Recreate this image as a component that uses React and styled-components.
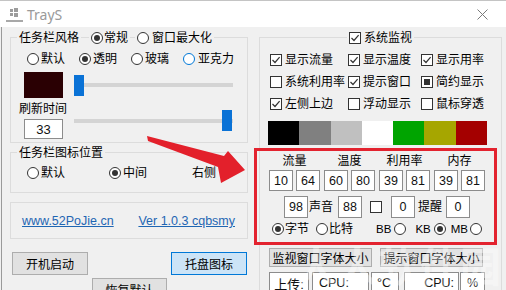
import React from "react";
import styled, { createGlobalStyle } from "styled-components";

const GlobalStyle = createGlobalStyle`
  html, body {
    margin: 0;
    padding: 0;
    background: #f0f0f0;
  }
  body {
    font-family: "Liberation Sans", "Noto Sans CJK SC", sans-serif;
    font-size: 12px;
    color: #000;
  }
`;

const Frame = styled.div`
  position: relative;
  width: 506px;
  height: 290px;
  overflow: hidden;
  background: #f0f0f0;
`;

const TitleBar = styled.div`
  height: 27px;
  box-sizing: border-box;
  background: #fff;
  border-top: 1px solid #c4c4c4;
  display: flex;
  align-items: center;
  padding-left: 6px;
`;

const AppIcon = styled.svg`
  width: 17px;
  height: 15px;
  flex-shrink: 0;
`;

const Title = styled.span`
  margin-left: 4px;
  font-family: "Noto Sans", "Liberation Sans", sans-serif;
  font-size: 14px;
  color: #9a9a9a;
  flex: 1;
`;

const CloseIcon = styled.svg`
  width: 11px;
  height: 11px;
  margin-right: 18px;
`;

const Client = styled.div`
  height: 263px;
  display: flex;
  margin-left: 1px;
  border-left: 1px solid #9a9a9a;
`;

const LeftCol = styled.div`
  width: 250px;
  flex-shrink: 0;
  box-sizing: border-box;
  padding: 10px 0 0 8px;
  display: flex;
  flex-direction: column;

  & > * {
    flex-shrink: 0;
  }
`;

const RightCol = styled.div`
  flex: 1;
  box-sizing: border-box;
  padding: 10px 0 0 7px;
  display: flex;
  flex-direction: column;
`;

const Group = styled.div`
  box-sizing: border-box;
  width: ${(p) => p.$w || 238}px;
  height: ${(p) => (p.$h ? `${p.$h}px` : "auto")};
  margin-top: ${(p) => p.$top || 0}px;
  border: 1px solid #dcdcdc;
  ${(p) => p.$open && "border-bottom: none; flex: 1;"}
  flex-shrink: 0;
  display: flex;
  flex-direction: column;

  & > * {
    flex-shrink: 0;
  }
`;

const GroupHead = styled.div`
  height: 18px;
  margin-top: -9px;
  display: flex;
  align-items: center;
  padding-left: ${(p) => p.$pad ?? 6}px;
  justify-content: ${(p) => (p.$center ? "center" : "flex-start")};
`;

const Legend = styled.span`
  background: #f0f0f0;
  padding: 0 2px;
  line-height: 16px;
  margin-right: ${(p) => p.$mr || 0}px;
`;

const Row = styled.div`
  display: flex;
  align-items: ${(p) => p.$align || "center"};
  margin-top: ${(p) => p.$top || 0}px;
  padding-left: ${(p) => p.$pad || 0}px;
  padding-right: ${(p) => p.$padR || 0}px;
  justify-content: ${(p) => p.$justify || "flex-start"};
`;

const RadioLabel = styled.span`
  display: inline-flex;
  align-items: center;
  gap: 2px;
  height: 16px;
  line-height: 16px;
  white-space: nowrap;
  margin-left: ${(p) => p.$ml || 0}px;
  font-size: ${(p) => p.$fs || 12}px;
  ${(p) => p.$bg && "background: #f0f0f0; padding: 0 2px;"}
`;

const Dot = styled.span`
  width: 12px;
  height: 12px;
  box-sizing: border-box;
  border-radius: 50%;
  border: 1px solid ${(p) => (p.$hover ? "#0078d7" : "#333")};
  background: #fff;
  display: inline-flex;
  align-items: center;
  justify-content: center;
  flex-shrink: 0;

  &::after {
    content: "";
    width: 6px;
    height: 6px;
    border-radius: 50%;
    background: #333;
    display: ${(p) => (p.$checked ? "block" : "none")};
  }
`;

const Radio = ({ checked, hover, right, gap, ml, bg, fs, children }) => (
  <RadioLabel $ml={ml} $bg={bg} $fs={fs} style={gap ? { gap } : undefined}>
    {right && <span>{children}</span>}
    <Dot $checked={checked} $hover={hover} />
    {!right && <span>{children}</span>}
  </RadioLabel>
);

const CheckLabel = styled.span`
  display: inline-flex;
  align-items: center;
  gap: 3px;
  height: 16px;
  line-height: 16px;
  white-space: nowrap;
  ${(p) => p.$bg && "background: #f0f0f0; padding: 0 2px;"}
  margin-left: ${(p) => p.$ml || 0}px;
`;

const Box = styled.span`
  width: 12px;
  height: 12px;
  box-sizing: border-box;
  border: 1px solid #333;
  background: #fff;
  display: inline-flex;
  align-items: center;
  justify-content: center;
  flex-shrink: 0;
`;

const FillMark = styled.span`
  width: 6px;
  height: 6px;
  background: #333;
`;

const Check = ({ state, bg, ml, children }) => (
  <CheckLabel $bg={bg} $ml={ml}>
    <Box>
      {state === "check" && (
        <svg width="10" height="10" viewBox="0 0 10 10">
          <polyline points="1.5,5 4,7.5 8.6,2.2" fill="none" stroke="#333" strokeWidth="1.2" />
        </svg>
      )}
      {state === "fill" && <FillMark />}
    </Box>
    {children && <span>{children}</span>}
  </CheckLabel>
);

const Swatch = styled.div`
  width: 39px;
  height: 26px;
  background: #2a0003;
  margin-left: 13px;
  flex-shrink: 0;
`;

const Slider = styled.div`
  width: 159px;
  height: 21px;
  margin-left: ${(p) => p.$ml || 0}px;
  margin-top: ${(p) => p.$top || 0}px;
  display: flex;
  align-items: center;
  background:
    linear-gradient(#d4d4d4, #d4d4d4) center / 100% 4px no-repeat;
`;

const Thumb = styled.span`
  width: 10px;
  height: 21px;
  background: #0a72d6;
  margin-left: ${(p) => p.$pos}px;
`;

const Stack = styled.div`
  display: flex;
  flex-direction: column;
  margin-left: 8px;
  width: 50px;
`;

const FieldLabel = styled.span`
  height: 16px;
  line-height: 16px;
  margin-top: 3px;
  white-space: nowrap;
`;

const TextBox = styled.div`
  box-sizing: border-box;
  width: ${(p) => p.$w || 24}px;
  height: ${(p) => p.$h || 21}px;
  margin-left: ${(p) => p.$ml || 0}px;
  margin-top: ${(p) => p.$top || 0}px;
  background: #fff;
  border: 1px solid #8c8c8c;
  display: flex;
  align-items: center;
  justify-content: ${(p) => p.$justify || "center"};
  padding: 0 ${(p) => p.$pad || 0}px;
  font-size: ${(p) => p.$fs || 12.5}px;
  color: #111;
  flex-shrink: 0;
  white-space: nowrap;
`;

const Link = styled.a`
  color: #1f66b3;
  text-decoration: underline;
  font-size: 12.5px;
  line-height: 16px;
`;

const Button = styled.div`
  box-sizing: border-box;
  width: ${(p) => p.$w || 76}px;
  height: ${(p) => p.$h || 23}px;
  background: ${(p) => (p.$primary ? "#cce4f7" : "#e1e1e1")};
  border: 1px solid ${(p) => (p.$primary ? "#0078d7" : "#adadad")};
  display: flex;
  align-items: center;
  justify-content: center;
  white-space: nowrap;
  margin-left: ${(p) => p.$ml || 0}px;
  flex-shrink: 0;
`;

const ButtonRow = styled.div`
  display: flex;
  justify-content: ${(p) => p.$justify || "space-between"};
  width: 235px;
  margin-left: 2px;
  margin-top: ${(p) => p.$top || 0}px;
`;

const CheckGrid = styled.div`
  display: grid;
  grid-template-columns: 78px 73px auto;
  grid-auto-rows: 22px;
  align-items: center;
  margin-top: 2px;
  padding-left: 10px;
`;

const ColorBar = styled.div`
  display: grid;
  grid-template-columns: repeat(7, 1fr);
  width: 219px;
  height: 24px;
  margin: 6px 0 0 8px;
`;

const ColorCell = styled.div`
  background: ${(p) => p.$c};
`;

const RedPanel = styled.div`
  box-sizing: border-box;
  width: 243px;
  height: 97px;
  margin: 3px 0 0 -6px;
  border: 3px solid #e3232f;
  display: flex;
  flex-direction: column;
`;

const PairGrid = styled.div`
  display: grid;
  grid-template-columns: repeat(4, 51px);
  column-gap: 4px;
  padding-left: 12px;
  margin-top: 2px;
`;

const Pair = styled.div`
  display: flex;
  flex-direction: column;
  align-items: center;
`;

const PairHead = styled.span`
  height: 16px;
  line-height: 16px;
  margin-bottom: 1px;
`;

const PairBoxes = styled.div`
  display: flex;
  gap: 3px;
`;

const Word = styled.span`
  line-height: 16px;
  margin-left: ${(p) => p.$ml || 0}px;
  white-space: nowrap;
`;

const Arrow = styled.svg`
  position: absolute;
  left: 145px;
  top: 133px;
  width: 102px;
  height: 52px;
  pointer-events: none;
`;

const Watermark = styled.div`
  position: absolute;
  left: 296px;
  top: 244px;
  font-family: "Noto Sans CJK SC", sans-serif;
  font-size: 41px;
  font-weight: 700;
  line-height: 1;
  color: rgba(255, 255, 255, 0.4);
  pointer-events: none;
  white-space: nowrap;
`;

const pairs = [
  ["流量", "10", "64"],
  ["温度", "60", "80"],
  ["利用率", "39", "81"],
  ["内存", "39", "81"],
];

const colors = ["#000000", "#808080", "#c0c0c0", "#ffffff", "#00a400", "#a6a600", "#a40000"];

export default function App() {
  return (
    <>
      <GlobalStyle />
      <Frame>
        <TitleBar>
          <AppIcon viewBox="0 0 17 15">
            <rect x="4" y="2" width="3" height="3" fill="#9c9c9c" />
            <rect x="8" y="1" width="4" height="4" fill="#9c9c9c" />
            <rect x="4" y="6" width="3" height="3" fill="#9c9c9c" />
            <rect x="8" y="6" width="4" height="4" fill="#9c9c9c" />
            <rect x="0" y="13" width="17" height="2" fill="#a8a8a8" />
          </AppIcon>
          <Title>TrayS</Title>
          <CloseIcon viewBox="0 0 11 11">
            <path d="M0.5 0.5 L10.5 10.5 M10.5 0.5 L0.5 10.5" stroke="#7a7a7a" strokeWidth="1" />
          </CloseIcon>
        </TitleBar>

        <Client>
          <LeftCol>
            <Group $h={106}>
              <GroupHead $pad={6}>
                <Legend $mr={8}>任务栏风格</Legend>
                <Radio bg checked gap={1}>常规</Radio>
                <Radio bg ml={5} gap={3}>窗口最大化</Radio>
              </GroupHead>
              <Row $top={4} $pad={16}>
                <Radio>默认</Radio>
                <Radio ml={14} checked>透明</Radio>
                <Radio ml={14}>玻璃</Radio>
                <Radio ml={14} hover gap={3}>亚克力</Radio>
              </Row>
              <Row $top={5}>
                <Swatch />
                <Slider $ml={11}>
                  <Thumb $pos={0} />
                </Slider>
              </Row>
              <Row $align="flex-start">
                <Stack>
                  <FieldLabel>刷新时间</FieldLabel>
                  <TextBox $w={39} $h={20} $ml={5} $top={2} $fs={13}>33</TextBox>
                </Stack>
                <Slider $ml={5} $top={12}>
                  <Thumb $pos={148} />
                </Slider>
              </Row>
            </Group>

            <Group $h={41} $top={9}>
              <GroupHead $pad={6}>
                <Legend>任务栏图标位置</Legend>
              </GroupHead>
              <Row $top={3} $pad={16}>
                <Radio>默认</Radio>
                <Radio ml={44} checked>中间</Radio>
                <Radio ml={45} right gap={4}>右侧</Radio>
              </Row>
            </Group>

            <Group $h={37} $top={9}>
              <Row $top={10} $pad={11} $padR={12} $justify="space-between">
                <Link>www.52PoJie.cn</Link>
                <Link>Ver 1.0.3 cqbsmy</Link>
              </Row>
            </Group>

            <ButtonRow $top={13}>
              <Button>开机启动</Button>
              <Button $primary>托盘图标</Button>
            </ButtonRow>
            <ButtonRow $top={3} $justify="center">
              <Button $w={75}>恢复默认</Button>
            </ButtonRow>
          </LeftCol>

          <RightCol>
            <Group $w={243} $open>
              <GroupHead $center $pad={0}>
                <Check bg state="check">系统监视</Check>
              </GroupHead>
              <CheckGrid>
                <Check state="check">显示流量</Check>
                <Check state="check">显示温度</Check>
                <Check state="check">显示用率</Check>
                <Check>系统利用率</Check>
                <Check state="check">提示窗口</Check>
                <Check state="fill">简约显示</Check>
                <Check state="check">左侧上边</Check>
                <Check>浮动显示</Check>
                <Check>鼠标穿透</Check>
              </CheckGrid>
              <ColorBar>
                {colors.map((c) => (
                  <ColorCell key={c} $c={c} />
                ))}
              </ColorBar>

              <RedPanel>
                <PairGrid>
                  {pairs.map(([name, a, b]) => (
                    <Pair key={name}>
                      <PairHead>{name}</PairHead>
                      <PairBoxes>
                        <TextBox>{a}</TextBox>
                        <TextBox>{b}</TextBox>
                      </PairBoxes>
                    </Pair>
                  ))}
                </PairGrid>
                <Row $top={5} $pad={27}>
                  <TextBox $h={22}>98</TextBox>
                  <Word $ml={1}>声音</Word>
                  <TextBox $h={22} $ml={5}>88</TextBox>
                  <Check ml={8} />
                  <TextBox $h={22} $ml={9}>0</TextBox>
                  <Word $ml={3}>提醒</Word>
                  <TextBox $h={22} $ml={4}>0</TextBox>
                </Row>
                <Row $top={3} $pad={15}>
                  <Radio checked gap={1}>字节</Radio>
                  <Radio ml={7} gap={1}>比特</Radio>
                  <Radio ml={23} right gap={3} fs={11.5}>BB</Radio>
                  <Radio ml={9} right gap={3} fs={11.5} checked>KB</Radio>
                  <Radio ml={5} right gap={2} fs={11.5}>MB</Radio>
                </Row>
              </RedPanel>

              <Row $top={3} $pad={9}>
                <Button $w={103} $h={19}>监视窗口字体大小</Button>
                <Button $w={103} $h={19} $ml={8}>提示窗口字体大小</Button>
              </Row>
              <Row $top={5} $pad={9}>
                <TextBox $w={40} $h={22} $fs={13}>上传:</TextBox>
                <TextBox $w={57} $h={22} $ml={3} $justify="flex-start" $pad={6}>CPU:</TextBox>
                <TextBox $w={28} $h={22} $ml={2} $justify="flex-start" $pad={5}>°C</TextBox>
                <TextBox $w={55} $h={22} $ml={5} $justify="flex-end" $pad={4}>CPU:</TextBox>
                <TextBox $w={25} $h={22} $ml={1}>%</TextBox>
              </Row>
            </Group>
          </RightCol>
        </Client>

        <Arrow viewBox="0 0 102 52">
          <polygon points="2,3 79,23 83,18 100,37 76,50 73,34 3,8" fill="#e3202b" />
        </Arrow>
        <Watermark>人人软件园</Watermark>
      </Frame>
    </>
  );
}
